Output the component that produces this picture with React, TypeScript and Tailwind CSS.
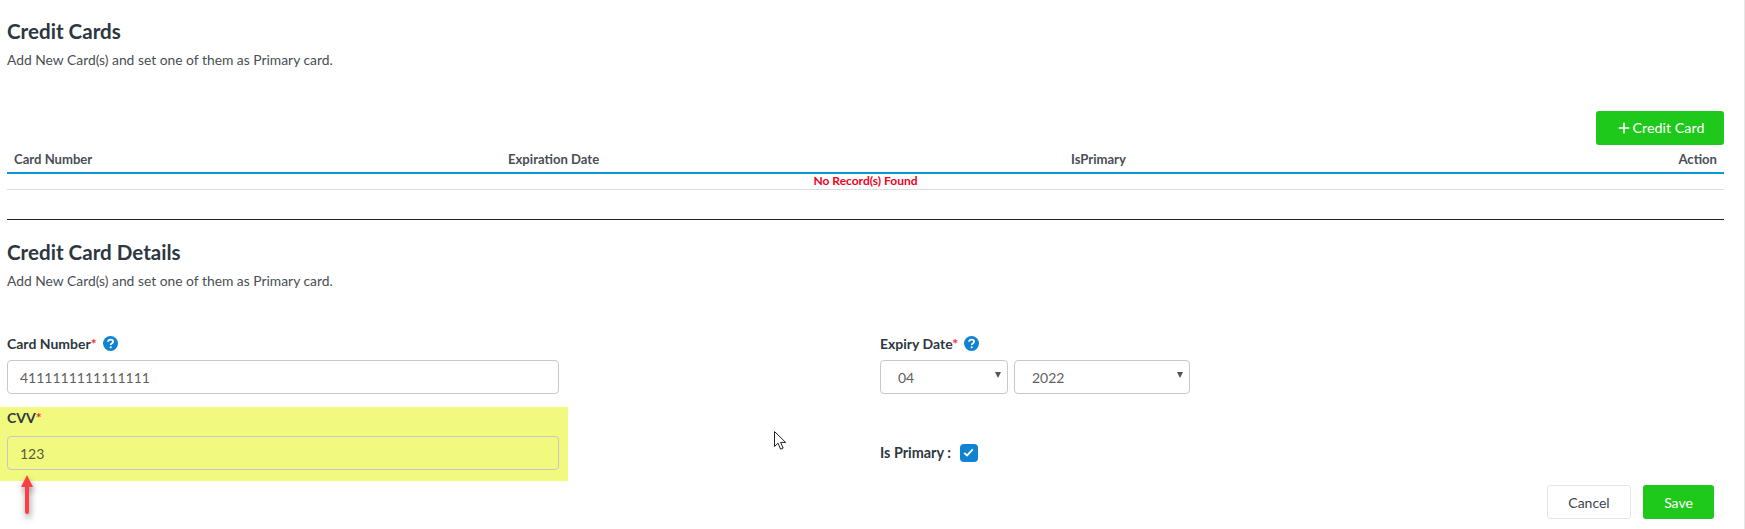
import React from "react";
import { Plus } from "lucide-react";

function HelpIcon() {
  return (
    <svg width="15" height="15" viewBox="0 0 14 14" className="shrink-0">
      <circle cx="7" cy="7" r="7" fill="#0f82d2" />
      <path
        d="M4.7 5.4C4.8 4.1 5.8 3.3 7.1 3.3C8.5 3.3 9.4 4.1 9.4 5.2C9.4 6.1 8.9 6.6 8.2 7C7.5 7.4 7.2 7.7 7.2 8.4"
        fill="none"
        stroke="white"
        strokeWidth="1.7"
      />
      <circle cx="7.2" cy="10.5" r="1" fill="white" />
    </svg>
  );
}

function Label({ text, required, help }: { text: string; required?: boolean; help?: boolean }) {
  return (
    <div className="flex items-center gap-[6px] h-[20px] text-[14px] font-bold text-[#2d3741]">
      <span>
        {text}
        {required && <span className="text-[#ff2b2b]">*</span>}
      </span>
      {help && <HelpIcon />}
    </div>
  );
}

function TextInput({ value, className }: { value: string; className?: string }) {
  return (
    <input
      readOnly
      defaultValue={value}
      className={`block w-full h-[34px] rounded-[4px] border border-[#c8c8c8] bg-transparent px-[12px] text-[14px] text-[#5f5f5f] outline-none ${className ?? ""}`}
    />
  );
}

function Select({ value, width }: { value: string; width: string }) {
  return (
    <div className={`relative h-[34px] ${width}`}>
      <select
        defaultValue={value}
        className="block w-full h-full appearance-none rounded-[4px] border border-[#c8c8c8] bg-white pl-[17px] text-[14px] text-[#5f5f5f] outline-none"
      >
        <option>{value}</option>
      </select>
      <span className="absolute right-[7px] top-[12px] h-0 w-0 border-x-[3px] border-t-[6px] border-x-transparent border-t-[#555555]" />
    </div>
  );
}

function SectionTitle({ title }: { title: string }) {
  return (
    <>
      <h2 className="text-[20.6px] leading-[24px] font-bold text-[#2d3741]">{title}</h2>
      <p className="mt-[7px] text-[13.85px] leading-[20px] text-[#4a4f55]">
        Add New Card(s) and set one of them as Primary card.
      </p>
    </>
  );
}

export default function App() {
  return (
    <div className="relative h-[529px] overflow-hidden border-r border-[#e6e6e6] bg-white pt-[19px] pl-[7px] pr-[20px] font-['Lato','Open_Sans',sans-serif]">
      <SectionTitle title="Credit Cards" />

      <div className="mt-[41px] flex justify-end">
        <button className="flex h-[34px] w-[128px] items-center justify-center gap-[1px] rounded-[3px] bg-[#1fc91c] text-[14.3px] text-white">
          <Plus size={16} strokeWidth={2.5} />
          Credit Card
        </button>
      </div>

      <table className="w-full table-fixed text-[13.1px]">
        <thead>
          <tr className="h-[28px] border-b-2 border-[#0b97cf] font-bold text-[#4a4f55]">
            <th className="w-[501px] pl-[7px] pt-[3px] text-left font-bold">Card Number</th>
            <th className="w-[563px] pt-[3px] text-left font-bold">Expiration Date</th>
            <th className="pt-[3px] text-left font-bold">IsPrimary</th>
            <th className="w-[80px] pr-[7px] pt-[3px] text-right font-bold">Action</th>
          </tr>
        </thead>
        <tbody>
          <tr className="h-[16px] border-b border-[#dddddd]">
            <td colSpan={4} className="pb-[1px] text-center text-[12px] leading-[14px] font-bold text-[#f0001e]">
              No Record(s) Found
            </td>
          </tr>
        </tbody>
      </table>

      <hr className="mt-[29px] border-t-[1px] border-[#222222]" />

      <div className="mt-[20px]">
        <SectionTitle title="Credit Card Details" />
      </div>

      <div className="mt-[42px] flex">
        <div className="w-[552px]">
          <Label text="Card Number" required help />
          <div className="mt-[7px]">
            <TextInput value="4111111111111111" />
          </div>
          <div className="mt-[13px] -ml-[7px] w-[568px] bg-[#f1fa7f] pl-[7px] pr-[9px] pb-[11px]">
            <Label text="CVV" required />
            <div className="mt-[9px]">
              <TextInput value="123" className="border-[#c4cb66] text-[#55583a]" />
            </div>
          </div>
        </div>

        <div className="ml-[321px]">
          <Label text="Expiry Date" required help />
          <div className="mt-[7px] flex gap-[6px]">
            <Select value="04" width="w-[128px]" />
            <Select value="2022" width="w-[176px]" />
          </div>
          <div className="mt-[48px] flex items-center gap-[9px]">
            <span className="text-[14.4px] font-bold text-[#2d3741]">Is Primary :</span>
            <span className="flex h-[18px] w-[18px] items-center justify-center rounded-[4px] bg-[#0f82d2]">
              <svg width="11" height="9" viewBox="0 0 11 9" fill="none">
                <path d="M1.2 4.8L4 7.4L9.8 1.4" stroke="white" strokeWidth="1.8" />
              </svg>
            </span>
          </div>
        </div>
      </div>

      <div className="absolute left-[1547px] top-[485px] flex gap-[12px]">
        <button className="h-[34px] w-[84px] rounded-[3px] border border-[#e4e4e4] bg-white text-[14px] text-[#3c4650]">
          Cancel
        </button>
        <button className="h-[34px] w-[71px] rounded-[3px] bg-[#1fc91c] text-[14px] text-white">Save</button>
      </div>

      {/* annotation arrow */}
      <svg
        width="20"
        height="44"
        viewBox="0 0 20 44"
        className="absolute left-[17px] top-[474px] overflow-visible drop-shadow-[1px_4px_3px_rgba(0,0,0,0.45)]"
      >
        <path d="M10 1L16 13H4Z" fill="#fb4045" />
        <path d="M10 10V38" stroke="#fb4045" strokeWidth="4" strokeLinecap="round" />
      </svg>

      {/* mouse cursor */}
      <svg width="14" height="20" viewBox="0 0 14 20" className="absolute left-[774px] top-[431px]">
        <path
          d="M0.5 0.5V15.5L4 12.2L6.6 18.2L9.2 17L6.6 11.4H11.6Z"
          fill="white"
          stroke="#222222"
          strokeWidth="1"
        />
      </svg>
    </div>
  );
}
